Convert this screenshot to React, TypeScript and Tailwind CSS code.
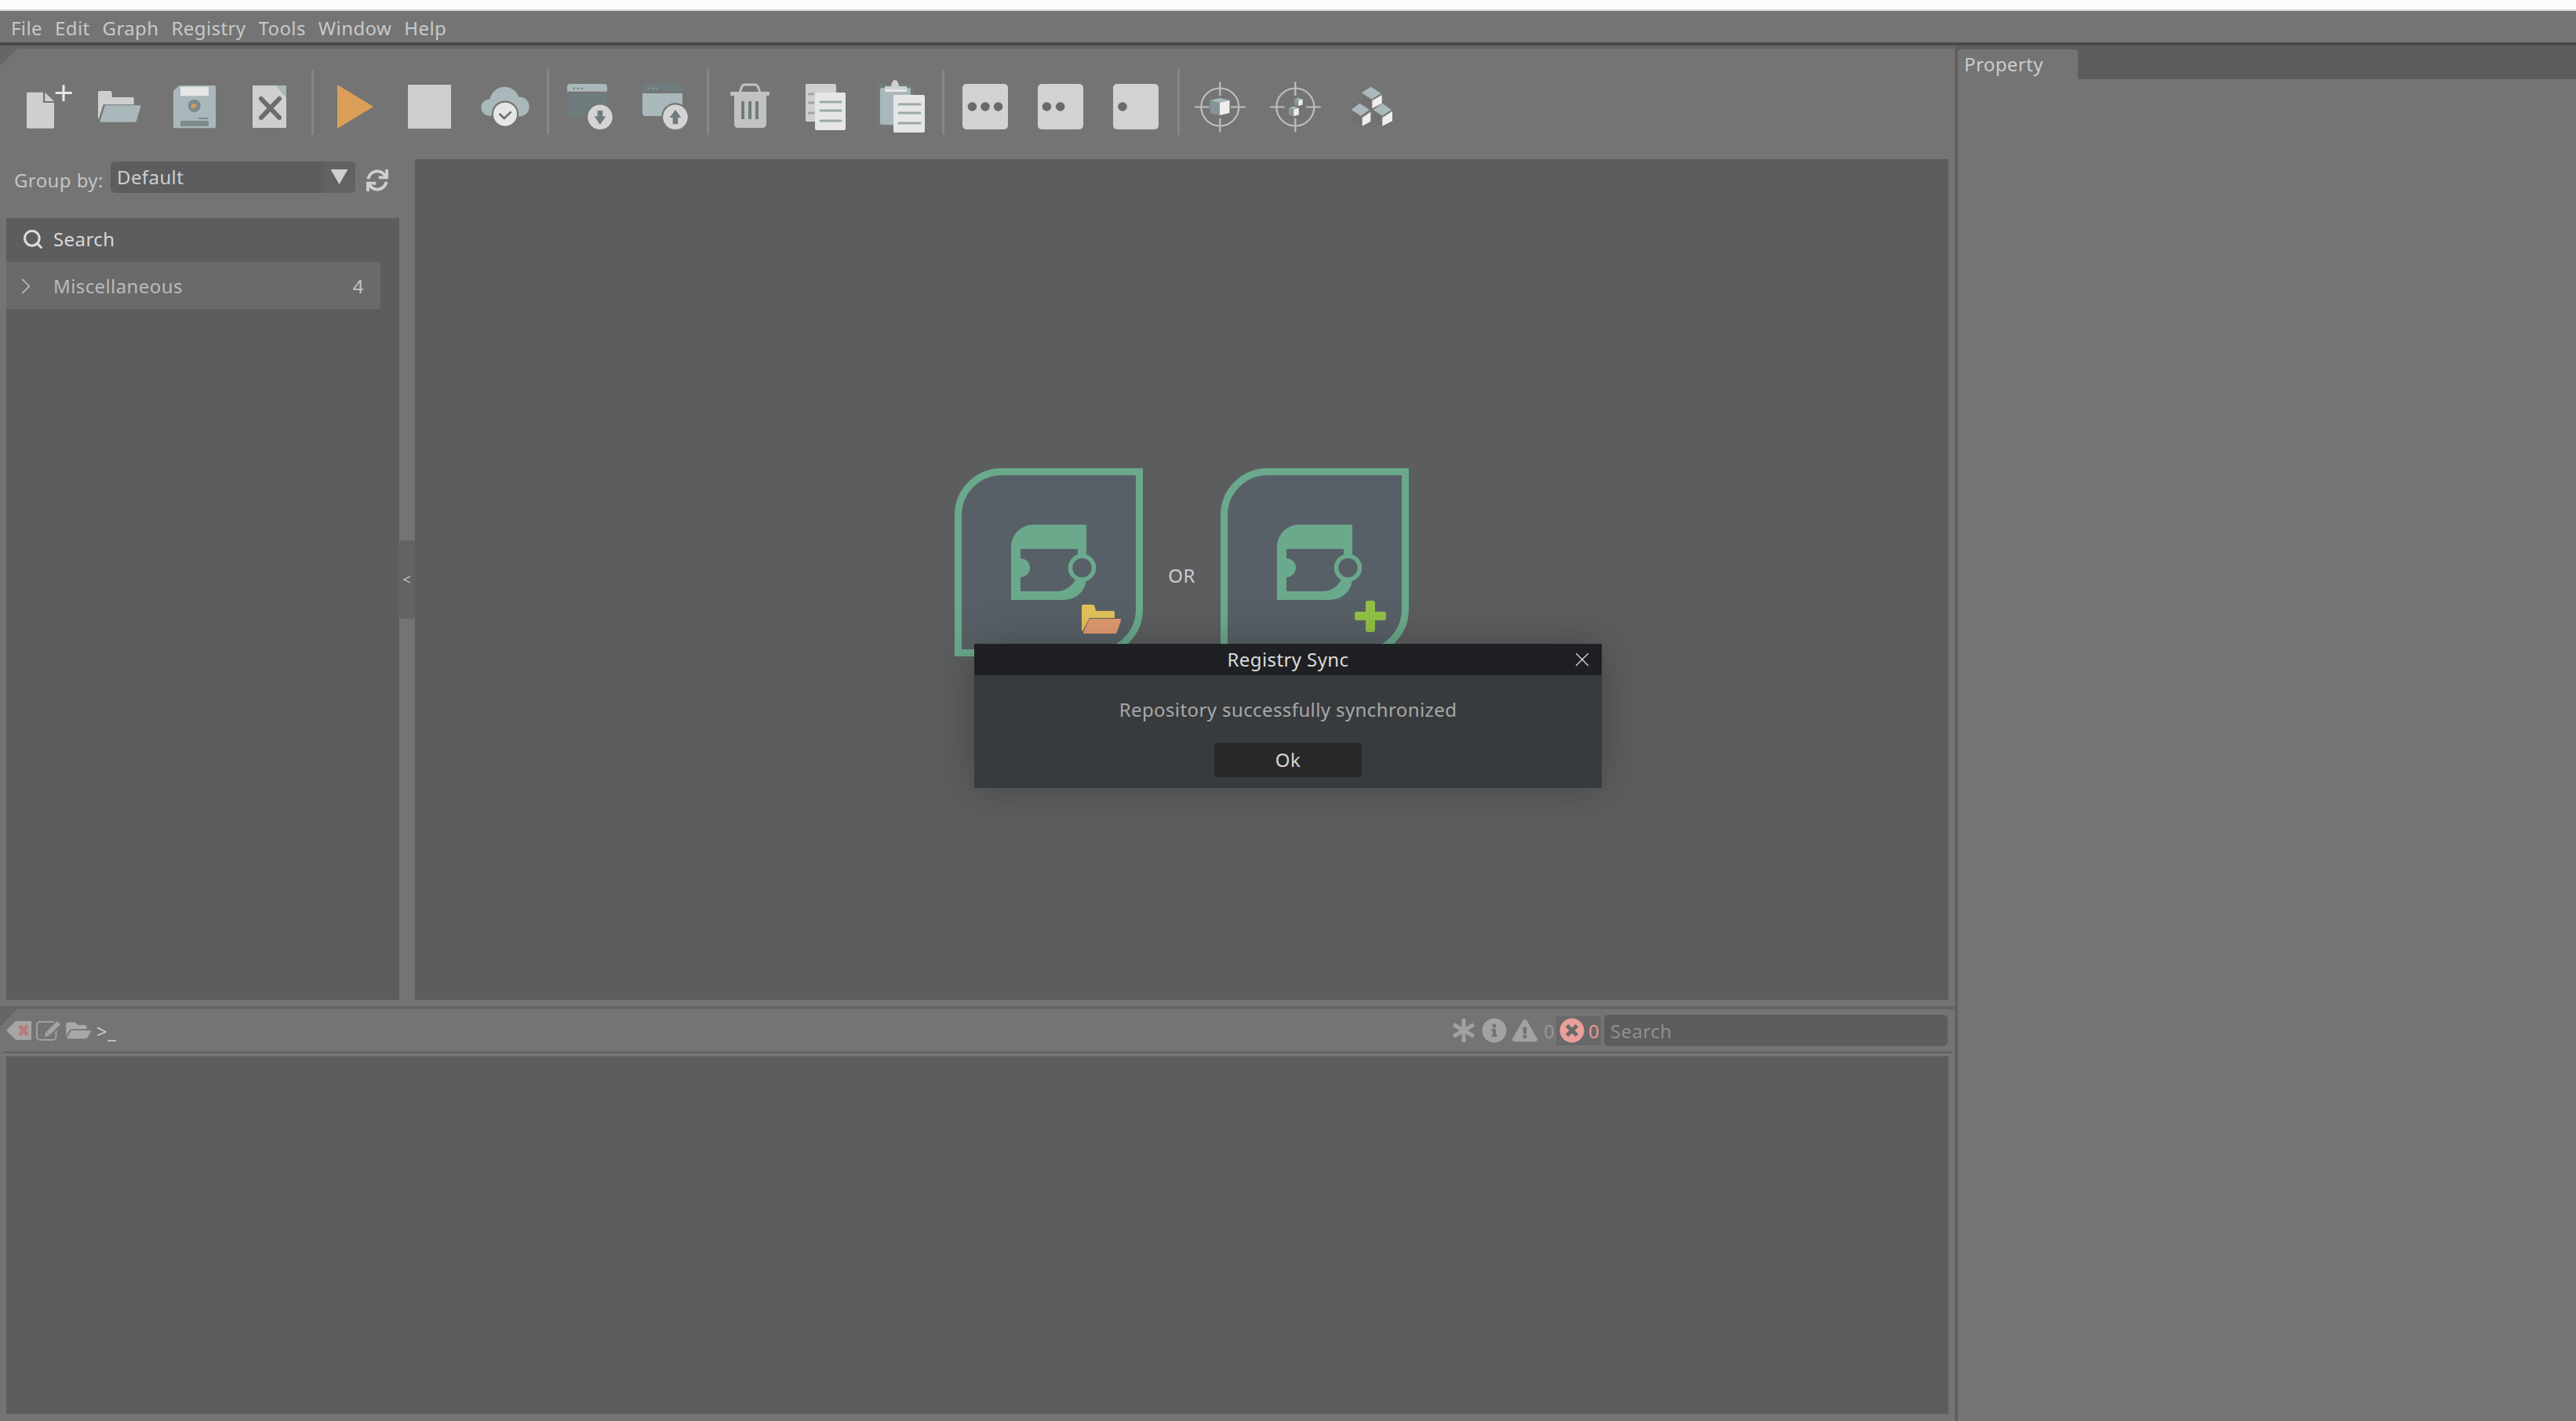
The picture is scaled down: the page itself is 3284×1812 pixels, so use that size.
import { ReactNode } from "react";
import { Search, ChevronRight, X } from "lucide-react";
import { FaAsterisk, FaExclamationTriangle, FaFolderOpen, FaInfoCircle, FaSync, FaTimesCircle } from "react-icons/fa";

const LIGHT = "#cfcfcf";
const STEEL = "#a9b8bb";
const SLATE = "#6f7c7e";
const PALE = "#e6e6e6";
const GREEN = "#6aa98c";
const CARD = "#586067";

// every toolbar icon is drawn on the same 96x84 button
function Tool({ children }: { children: ReactNode }) {
  return (
    <svg viewBox="0 0 96 84" className="h-[84px] w-[96px] shrink-0">
      {children}
    </svg>
  );
}

function Sep() {
  return <div className="ml-[5px] mr-1 h-[84px] w-[3px] shrink-0 bg-[#868686]" />;
}

function WindowIcon({ up }: { up?: boolean }) {
  return (
    <Tool>
      <path d="M19 28.7 V23 Q19 19 23 19 H66 Q70 19 70 23 V28.7 Z" fill={up ? SLATE : STEEL} />
      <path d="M19 31 H70 V56 Q70 60 66 60 H23 Q19 60 19 56 Z" fill={up ? STEEL : SLATE} />
      <circle cx="27.7" cy="24.7" r="1.2" fill={up ? "#8b999b" : SLATE} />
      <circle cx="32.7" cy="24.7" r="1.2" fill={up ? "#8b999b" : SLATE} />
      <circle cx="37.7" cy="24.7" r="1.2" fill={up ? "#8b999b" : SLATE} />
      <circle cx="61" cy="61.3" r="18" fill="#747474" />
      <circle cx="61" cy="61.3" r="15.8" fill="#d4d4d4" />
      {up ? (
        <path d="M61 52 L68.3 62 H64.3 V70.3 H57.7 V62 H53.7 Z" fill={SLATE} />
      ) : (
        <path d="M61 71 L68.3 60.3 H64.3 V53 H57.7 V60.3 H53.7 Z" fill={SLATE} />
      )}
    </Tool>
  );
}

function Dots({ xs }: { xs: number[] }) {
  return (
    <Tool>
      <rect x="19" y="19" width="58" height="58" rx="5" fill="#d2d2d2" />
      {xs.map((x) => (
        <circle key={x} cx={x} cy="48" r="5.8" fill="#6a6a6a" />
      ))}
    </Tool>
  );
}

function Cube({ x, y, s, d, h }: { x: number; y: number; s: number; d: number; h: number }) {
  return (
    <g>
      <path d={`M${x} ${y} l${s} ${d} l${-s} ${d} l${-s} ${-d} Z`} fill={STEEL} />
      <path d={`M${x - s} ${y + d} l${s} ${d} v${h} l${-s} ${-d} Z`} fill="#849598" />
      <path d={`M${x + s} ${y + d} l${-s} ${d} v${h} l${s} ${-d} Z`} fill="#eeeeee" />
    </g>
  );
}

function Crosshair({ children }: { children: ReactNode }) {
  return (
    <Tool>
      <circle cx="47.3" cy="48.5" r="24" fill="none" stroke="#bdbdbd" strokeWidth="2.2" />
      <path d="M15.3 48.5 H33.7 M61 48.5 H79.7 M47.3 16.3 V34 M47.3 63 V80.5" stroke="#bdbdbd" strokeWidth="2.2" />
      {children}
    </Tool>
  );
}

function Toolbar() {
  return (
    <div className="relative flex h-[140px] shrink-0 px-2 pt-[26px]">
      <Corner />
      <Tool>
        <path d="M26 31.5 Q26 29.7 28 29.7 H47 V43 H61 V74 Q61 75.7 59 75.7 H28 Q26 75.7 26 74 Z" fill={LIGHT} />
        <path d="M49.3 30 L61 41 H49.3 Z" fill={LIGHT} />
        <path d="M73 20.3 V41 M62.7 30.5 H83.7" stroke="#e8e8e8" strokeWidth="3" />
      </Tool>
      <Tool>
        <path d="M21 30 Q21 28 23 28 H36 Q38.7 28 38.7 31 V36 H65 Q66.7 36 66.7 38 V45.3 H27.7 L21.8 63.7 Q21 63 21 62 Z" fill={LIGHT} />
        <path d="M31 46.3 H74 Q75.8 46.3 75.3 48 L70 66 Q69.5 67.7 68 67.7 H25 Q23 67.7 23.5 66 L29.3 48 Q29.7 46.3 31 46.3 Z" fill={STEEL} />
      </Tool>
      <Tool>
        <path d="M28.3 21 H73.5 Q75 21 75 22.5 V74 Q75 75.3 73.5 75.3 H22.5 Q21 75.3 21 74 V27.7 Z" fill={STEEL} />
        <rect x="30" y="22.7" width="36" height="11.6" rx="1" fill={PALE} />
        <circle cx="47.7" cy="47" r="8" fill="#7c8a8c" />
        <rect x="44" y="43.6" width="1.8" height="6.8" fill="#dc9f58" />
        <circle cx="48" cy="47" r="2.4" fill="#dc9f58" />
        <rect x="52.7" y="62" width="13.3" height="2" rx="1" fill="#7c8a8c" />
        <rect x="30" y="66" width="36" height="7" rx="1" fill="#7c8a8c" />
      </Tool>
      <Tool>
        <path d="M26 21 H56 L69 36 V75 H26 Z" fill={LIGHT} />
        <path d="M56 21 H69 V36 Z" fill={STEEL} />
        <path d="M37 38 L60 62 M60 38 L37 62" stroke="#6c6c6c" strokeWidth="6" strokeLinecap="round" />
      </Tool>
      <Sep />
      <Tool>
        <path d="M26 20 L72 48 L26 76 Z" fill="#dc9f58" />
      </Tool>
      <Tool>
        <rect x="20" y="20" width="55" height="56" fill={LIGHT} />
      </Tool>
      <Tool>
        <circle cx="47.3" cy="41.7" r="19" fill={STEEL} />
        <circle cx="27.8" cy="49" r="10.5" fill={STEEL} />
        <circle cx="66.2" cy="48" r="12.5" fill={STEEL} />
        <rect x="28" y="42" width="38" height="17.5" fill={STEEL} />
        <circle cx="48" cy="57.7" r="17.2" fill="#747474" />
        <circle cx="48" cy="57.7" r="15" fill={PALE} />
        <path d="M40.7 57 L46.7 63 L55.7 54.3" fill="none" stroke="#6a6a6a" strokeWidth="2.5" />
      </Tool>
      <Sep />
      <WindowIcon />
      <WindowIcon up />
      <Sep />
      <Tool>
        <path d="M35 30 L38 22 Q39 20 41 20 H55 Q57 20 58 22 L61 30" fill="none" stroke="#c2c2c2" strokeWidth="3" />
        <rect x="23" y="29" width="50" height="5" rx="1.5" fill="#c2c2c2" />
        <path d="M28 34 H69 V70 Q69 75 64 75 H33 Q28 75 28 70 Z" fill="#c2c2c2" />
        <path d="M39 41 V64 M48 41 V64 M57 41 V64" stroke={SLATE} strokeWidth="4" />
      </Tool>
      <Tool>
        <rect x="23" y="19" width="39" height="48" rx="2" fill={LIGHT} />
        <path d="M27 32 H33 M27 43 H33 M27 56 H33" stroke="#9aa8aa" strokeWidth="3" strokeLinecap="round" />
        <rect x="35" y="30" width="39" height="48" rx="2" fill={PALE} />
        <path d="M42 42 H68 M42 53 H68 M42 66 H68" stroke="#9aa8aa" strokeWidth="3" strokeLinecap="round" />
      </Tool>
      <Tool>
        <rect x="18" y="19" width="47" height="55" rx="1" fill={SLATE} />
        <rect x="22" y="24" width="39" height="47" rx="2" fill={STEEL} />
        <path d="M28 29 V22 H36 Q37 14 41 14 Q45 14 46 22 H56 V29 Z" fill={LIGHT} />
        <rect x="28" y="26" width="28" height="3" fill={PALE} />
        <rect x="39" y="33" width="40" height="48" rx="2" fill={PALE} />
        <path d="M46 45 H73 M46 56 H73 M46 69 H73" stroke="#9aa8aa" strokeWidth="3" strokeLinecap="round" />
      </Tool>
      <Sep />
      <Dots xs={[31.4, 48, 64.6]} />
      <Dots xs={[30.4, 47.7]} />
      <Dots xs={[31]} />
      <Sep />
      <Crosshair>
        <Cube x={47} y={37} s={12.5} d={3} h={16} />
      </Crosshair>
      <Crosshair>
        <Cube x={51.3} y={37} s={5.3} d={1.5} h={7} />
        <Cube x={45.3} y={47.7} s={6.5} d={2} h={8.5} />
      </Crosshair>
      <Tool>
        <path d="M47.7 22.7 L60.7 31 L48.7 38.7 L35.7 30.3 Z" fill={STEEL} />
        <path d="M35.7 33 L47.3 40 V50 L35.7 43 Z" fill="#707070" />
        <path d="M49.3 40.3 L61.7 33 V43.7 L49.3 50.3 Z" fill="#eeeeee" />
        <path d="M33.3 43.7 L46 52 L35 59.7 L22.7 52 Z" fill={STEEL} />
        <path d="M22.7 54 L35 62 V73 L22.7 66 Z" fill="#707070" />
        <path d="M36.7 62 L47.3 54.7 V67 L36.7 72.7 Z" fill="#eeeeee" />
        <path d="M62.3 43.7 L74 52 L62.3 59.7 L50.7 52 Z" fill={STEEL} />
        <path d="M50.7 54 L60.7 62 V73 L50.7 66 Z" fill="#707070" />
        <path d="M62.3 62 L75 53.7 V66.3 L62.3 72.7 Z" fill="#eeeeee" />
      </Tool>
    </div>
  );
}

// the dark notch in the corner of a toolbar
function Corner() {
  return <div className="absolute left-0 top-0 h-[22px] w-[22px] bg-[#666666] [clip-path:polygon(0_0,100%_0,0_100%)]" />;
}

function NodeCard({ children }: { children: ReactNode }) {
  return (
    <svg viewBox="0 0 240 240" className="h-[240px] w-[240px] shrink-0">
      <path d="M4.5 60 A55.5 55.5 0 0 1 60 4.5 H235.5 V180 A55.5 55.5 0 0 1 180 235.5 H4.5 Z" fill={CARD} stroke={GREEN} strokeWidth="9" />
      <path
        fillRule="evenodd"
        d="M72 168 V100 A28 28 0 0 1 100 72 H168 V140 A28 28 0 0 1 140 168 Z M84 103 V157 H130 A27 27 0 0 0 157 130 V103 Z"
        fill={GREEN}
      />
      <path d="M84 115 A12 12 0 0 1 84 139 Z" fill={GREEN} />
      <circle cx="162.5" cy="127" r="15" fill={CARD} stroke={GREEN} strokeWidth="5.5" />
      {children}
    </svg>
  );
}

function Canvas() {
  return (
    <div className="mt-px flex flex-1 items-center justify-center gap-8 bg-[#5c5d5f] pb-[44px]">
      <NodeCard>
        <path d="M162 176 Q162 174 164 174 H176 Q178 174 178.5 176 L180 182 H202 Q204 182 204 184 V191 H172 L163 208 Q162 208 162 206 Z" fill="#e2c15a" />
        <path d="M172 192 H210 Q212.5 192 212 194 L207 209 Q206.5 211 205 211 H165 Q163.5 211 164 209 Z" fill="#e09b70" />
      </NodeCard>
      <span className="mt-[34px] text-[24px] text-[#cccccc]">OR</span>
      <NodeCard>
        <path d="M185 172 Q185 169 188 169 H194 Q197 169 197 172 V183 H208 Q211 183 211 186 V191 Q211 194 208 194 H197 V206 Q197 209 194 209 H188 Q185 209 185 206 V194 H174 Q171 194 171 191 V186 Q171 183 174 183 H185 Z" fill="#93c047" />
      </NodeCard>
    </div>
  );
}

function Sidebar() {
  return (
    <div className="flex w-[509px] shrink-0 flex-col pl-2">
      <div className="mt-1 flex h-10 items-center">
        <span className="ml-[10px] mt-2 w-[123px] whitespace-nowrap text-[24px] text-[#c4c4c4]">Group by:</span>
        <div className="flex h-10 w-[312px] overflow-hidden rounded-md bg-[#5c5d5f]">
          <span className="flex-1 pl-2 text-[24px] leading-[39px] text-[#cfcfcf]">Default</span>
          <div className="flex w-[41px] justify-center bg-[#626264] pt-[10px]">
            <div className="h-[19px] w-[22px] bg-[#cfcfcf] [clip-path:polygon(0_0,100%_0,50%_100%)]" />
          </div>
        </div>
        <FaSync className="ml-[14px] mt-2 text-[28px] text-[#cfcfcf]" />
      </div>
      <div className="mt-8 flex flex-1 flex-col bg-[#5c5d5f]">
        <div className="flex h-14 items-center gap-3 pb-[2px] pl-5">
          <Search className="h-7 w-7 text-[#dddddd]" strokeWidth={2.6} />
          <span className="text-[24px] text-[#d8d8d8]">Search</span>
        </div>
        <div className="flex h-[60px] w-[477px] items-center bg-[#6a6a6a] pl-2 pr-[21px] pt-px">
          <ChevronRight className="h-[34px] w-[34px] text-[#c0c0c0]" strokeWidth={1.2} />
          <span className="ml-[18px] flex-1 text-[24px] text-[#bababa]">Miscellaneous</span>
          <span className="text-[24px] text-[#c4c4c4]">4</span>
        </div>
      </div>
    </div>
  );
}

function LogBar() {
  return (
    <div className="relative flex h-[54px] shrink-0 items-center pl-2 pr-[9px]">
      <Corner />
      <svg viewBox="0 0 32 24" className="h-6 w-8 shrink-0">
        <path d="M0 12 L12 0 H31 Q32 0 32 1 V23 Q32 24 31 24 H12 Z" fill="#a5a5a5" />
        <path d="M17 6 L27 18 M27 6 L17 18" stroke="#b97a7a" strokeWidth="4.5" />
      </svg>
      <svg viewBox="0 0 32 26" className="ml-[6px] h-[26px] w-8 shrink-0">
        <rect x="1" y="2" width="24.5" height="23" rx="4" fill="none" stroke="#a0a0a0" strokeWidth="2" />
        <path d="M29 3 L15 17" stroke="#747474" strokeWidth="10" />
        <path d="M29 3 L15.5 16.5" stroke="#a5a5a5" strokeWidth="6" />
        <path d="M11 21 L12.5 14.5 L17.5 19.5 Z" fill="#a5a5a5" />
      </svg>
      <FaFolderOpen className="ml-[6px] h-7 w-8 text-[#a8a8a8]" />
      <span className="ml-[7px] pt-[2px] text-[24px] text-[#cfcfcf]">&gt;_</span>
      <div className="ml-auto flex items-center">
        <FaAsterisk className="h-[30px] w-[30px] text-[#a2a2a2]" />
        <FaInfoCircle className="ml-2 h-8 w-8 text-[#a2a2a2]" />
        <FaExclamationTriangle className="ml-[7px] h-8 w-8 text-[#a2a2a2]" />
        <span className="ml-2 w-[16px] pt-[2px] text-[24px] text-[#999999]">0</span>
        <div className="flex h-[37px] w-[57px] items-center bg-[#686868] pl-1">
          <FaTimesCircle className="h-8 w-8 shrink-0 text-[#ea9f99]" />
          <span className="ml-[5px] pt-[2px] text-[24px] text-[#e89a94]">0</span>
        </div>
        <div className="ml-1 flex h-10 w-[438px] items-center rounded-md bg-[#5c5d5f] pl-2 pt-[2px] text-[24px] text-[#8f8f8f]">Search</div>
      </div>
    </div>
  );
}

function SyncDialog() {
  return (
    <div className="absolute left-[1242px] top-[821px] flex h-[184px] w-[800px] flex-col bg-[#383b3d] shadow-[0_0_50px_rgba(0,0,0,0.25)]">
      <div className="relative flex h-10 items-center justify-center bg-[#1f2023] text-[24px] text-[#dadada]">
        Registry Sync
        <X className="absolute right-[10px] top-[5px] h-[30px] w-[30px] text-[#dddddd]" strokeWidth={1} />
      </div>
      <p className="mt-[25px] text-center text-[24px] leading-[38px] text-[#a8a8a8]">Repository successfully synchronized</p>
      <button className="mx-auto mt-[23px] flex h-11 w-[188px] items-center justify-center rounded-[4px] bg-[#282828] text-[24px] text-[#d6d6d6]">Ok</button>
    </div>
  );
}

export default function App() {
  const menus = ["File", "Edit", "Graph", "Registry", "Tools", "Window", "Help"];

  return (
    <div className="relative flex h-[1812px] w-[3284px] flex-col overflow-hidden bg-[#747474] font-['Noto_Sans',sans-serif] tracking-[0.4px]">
      <div className="h-3 shrink-0 bg-[#fcfcfc]" />
      <div className="h-[2px] shrink-0 bg-[#d4d4d4]" />

      {/* Menu bar */}
      <div className="flex h-10 shrink-0 items-center pl-[6px] pt-[3px] text-[24px] text-[#c8c8c8]">
        {menus.map((m) => (
          <span key={m} className="px-2">
            {m}
          </span>
        ))}
      </div>
      <div className="h-1 shrink-0 bg-[#4a4a4a]" />

      <div className="flex flex-1">
        <div className="flex w-[2492px] shrink-0 flex-col">
          <div className="h-1 shrink-0 bg-[#666666]" />
          <Toolbar />

          <div className="flex h-[1073px] shrink-0 pr-2">
            <Sidebar />
            {/* Collapse handle */}
            <div className="flex w-5 shrink-0 items-center">
              <div className="flex h-[100px] w-5 items-center justify-center rounded-[4px] bg-[#636363] text-[#cfcfcf]">
                <svg viewBox="0 0 10 10" className="h-[10px] w-[10px]">
                  <path d="M9 1 L1 5 L9 9" fill="none" stroke="#cfcfcf" strokeWidth="1.2" />
                </svg>
              </div>
            </div>
            <Canvas />
          </div>

          <div className="mt-2 h-1 shrink-0 bg-[#666666]" />
          <LogBar />
          <div className="ml-1 mr-1 h-[2px] shrink-0 bg-[#5e5e5e]" />
          <div className="mx-2 mb-[9px] mt-1 flex-1 bg-[#5c5d5f]" />
        </div>

        <div className="w-1 shrink-0 bg-[#616161]" />

        {/* Property dock */}
        <div className="flex flex-1 flex-col">
          <div className="flex h-[43px] shrink-0 items-end bg-[#5c5d5f]">
            <div className="flex h-[38px] w-[153px] items-center rounded-t-[4px] bg-[#747474] pl-2 text-[24px] text-[#cccccc]">Property</div>
          </div>
        </div>
      </div>

      <SyncDialog />
    </div>
  );
}
